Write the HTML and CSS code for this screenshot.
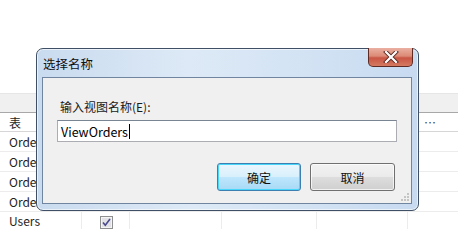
FILE: index.html
```html
<!DOCTYPE html>
<html>
  <head>
    <meta charset="UTF-8">
    <title>选择名称</title>
    <link rel="stylesheet" href="styles.css">
  </head>
  <body>
    <div class="screen">
      <div class="top"></div>
      <div class="band"></div>
      <div class="grid">
        <div class="row head">
          <div class="cell c1">表</div><div class="cell c2"></div><div class="cell c3"></div><div class="cell c4"></div><div class="cell c5"></div><div class="cell c6">&#8943;</div>
        </div>
        <div class="row">
          <div class="cell c1">Orders</div><div class="cell c2"></div><div class="cell c3"></div><div class="cell c4"></div><div class="cell c5"></div><div class="cell c6"></div>
        </div>
        <div class="row">
          <div class="cell c1">Orders</div><div class="cell c2"></div><div class="cell c3"></div><div class="cell c4"></div><div class="cell c5"></div><div class="cell c6"></div>
        </div>
        <div class="row">
          <div class="cell c1">Orders</div><div class="cell c2"></div><div class="cell c3"></div><div class="cell c4"></div><div class="cell c5"></div><div class="cell c6"></div>
        </div>
        <div class="row">
          <div class="cell c1">Orders</div><div class="cell c2"></div><div class="cell c3"></div><div class="cell c4"></div><div class="cell c5"></div><div class="cell c6"></div>
        </div>
        <div class="row last">
          <div class="cell c1">Users</div>
          <div class="cell c2 center">
            <svg class="check" width="13" height="13" viewBox="0 0 13 13">
              <rect x="0.5" y="0.5" width="12" height="12" fill="#f4f4f4" stroke="#8e8f8f"/>
              <rect x="2" y="2" width="9" height="9" fill="#e2e2e6"/>
              <path d="M3 6.5 L5.3 9.3 L10 3" fill="none" stroke="#4a4a8c" stroke-width="1.6"/>
            </svg>
          </div>
          <div class="cell c3"></div><div class="cell c4"></div><div class="cell c5"></div><div class="cell c6"></div>
        </div>
      </div>

      <div class="dialog">
        <div class="titlebar">
          <span class="title">选择名称</span>
          <div class="close">
            <svg width="16" height="12" viewBox="0 0 16 12">
              <path d="M3 1 L13 11 M13 1 L3 11" stroke="#5a2a22" stroke-width="4" stroke-linecap="square"/>
              <path d="M3 1 L13 11 M13 1 L3 11" stroke="#ffffff" stroke-width="2.2" stroke-linecap="square"/>
            </svg>
          </div>
        </div>
        <div class="client">
          <div class="label">输入视图名称(E):</div>
          <div class="input"><span>ViewOrders</span><i class="caret"></i></div>
          <div class="buttons">
            <div class="btn default">确定</div>
            <div class="btn">取消</div>
          </div>
          <svg class="grip" width="9" height="9" viewBox="0 0 9 9">
            <rect x="6" y="0" width="2" height="2" fill="#c4c4c4"/>
            <rect x="3" y="3" width="2" height="2" fill="#c4c4c4"/>
            <rect x="6" y="3" width="2" height="2" fill="#c4c4c4"/>
            <rect x="0" y="6" width="2" height="2" fill="#c4c4c4"/>
            <rect x="3" y="6" width="2" height="2" fill="#c4c4c4"/>
            <rect x="6" y="6" width="2" height="2" fill="#c4c4c4"/>
          </svg>
        </div>
      </div>
    </div>
  </body>
</html>
```

FILE: styles.css
```css
body { margin: 0; background: #ffffff; font-family: "Noto Sans CJK SC", "DejaVu Sans", sans-serif; font-size: 12px; color: #1e1e1e }

.screen { position: relative; width: 458px; height: 229px; overflow: hidden }
.top { height: 93px; background: #ffffff }
.band { height: 18px; background: #f0f0f0; border-bottom: 1px solid #a8a8a8; border-top: 1px solid #e6e6e6 }

.grid { display: flex; flex-direction: column }
.row { display: flex; height: 20px; border-bottom: 1px solid #ececec; box-sizing: border-box }
.row.head { height: 19px; border-bottom: 1px solid #d6d6d6 }
.row.last { height: 17px; border-bottom: none }
.cell { border-right: 1px solid #ececec; box-sizing: border-box; padding-left: 9px; line-height: 19px; white-space: nowrap; overflow: hidden }
.row.last .cell { line-height: 16px; padding-top: 1px }
.cell.center { display: flex; align-items: center; justify-content: center; padding: 0 }
.row.last .cell.center { padding-top: 0 }
.c1 { width: 82px }
.c2 { width: 48px }
.c3 { width: 92px }
.c4 { width: 95px }
.c5 { width: 91px }
.c6 { flex: 1; border-right: none; padding-left: 16px; color: #444 }
.check { display: block; margin-top: 4px; margin-left: 1px }

.dialog { position: absolute; left: 36px; top: 48px; width: 383px; height: 163px; box-sizing: border-box; border: 1px solid #3f5066; border-radius: 7px; background: linear-gradient(to right, #c9dbef 0%, #dde9f6 40%, #d3e3f4 70%, #c7daf0 100%); box-shadow: 0 0 0 1px rgba(255,255,255,0.6) inset; display: flex; flex-direction: column; padding: 0 6px 6px 5px }
.titlebar { position: relative; height: 28px; display: flex; align-items: center }
.title { font-size: 12.5px; color: #111; padding-left: 1px; margin-top: 1px }
.close { position: absolute; right: -1px; top: -1px; width: 45px; height: 19px; box-sizing: border-box; border: 1px solid #5e2b24; border-top: none; border-radius: 0 0 5px 5px; background: linear-gradient(to bottom, #eab0a2 0%, #dc8a76 45%, #c95544 55%, #d57a62 100%); display: flex; align-items: center; justify-content: center }
.close svg { display: block }

.client { position: relative; flex: 1; background: #f0f0f0; border: 1px solid #6f85a0; box-sizing: border-box }
.label { position: absolute; left: 17px; top: 20px; font-size: 12px; color: #1a1a1a }
.input { position: absolute; left: 14px; top: 42px; width: 340px; height: 22px; box-sizing: border-box; background: #ffffff; border: 1px solid #abadb3; border-top-color: #7a8594; display: flex; align-items: center; padding-left: 3px; font-size: 12.5px; color: #000 }
.caret { display: inline-block; width: 1px; height: 15px; background: #000; margin-left: 1px }
.buttons { position: absolute; left: 174px; top: 85px; display: flex; gap: 9px }
.btn { width: 85px; height: 28px; box-sizing: border-box; border: 1px solid #707070; border-radius: 3px; background: linear-gradient(to bottom, #f2f2f2 0%, #ebebeb 48%, #dddddd 52%, #cfcfcf 100%); display: flex; align-items: center; justify-content: center; font-size: 12px; color: #111; box-shadow: inset 0 0 0 1px rgba(255,255,255,0.7) }
.btn.default { width: 84px; border-color: #3c7fb1; background: linear-gradient(to bottom, #eaf6fd 0%, #d9f0fc 48%, #bee6fd 52%, #a7d9f5 100%); box-shadow: inset 0 0 0 1px #48d6fb }
.grip { position: absolute; right: 1px; bottom: 1px }
```
